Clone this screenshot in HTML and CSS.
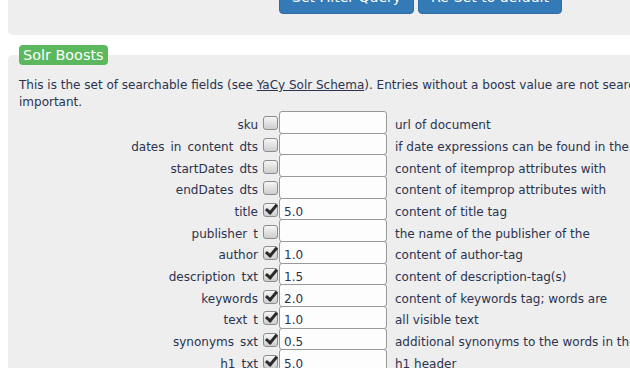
FILE: index.html
```html
<!DOCTYPE html>
<html lang="en">
    <head>
        <meta charset="UTF-8">
        <title>Ranking and Heuristics</title>
        <link rel="stylesheet" href="styles.css">
    </head>
    <body>
        <div class="panel">
            <div class="actions">
                <button type="button" class="btn">Set Filter Query</button>
                <button type="button" class="btn">Re-Set to default</button>
            </div>
        </div>

        <fieldset class="boosts">
            <legend><span class="label">Solr Boosts</span></legend>
            <p class="intro">
                This is the set of searchable fields (see <a href="#">YaCy Solr Schema</a>). Entries without a boost value are not searched. Boost values make hits inside the corresponding field more<br>important.
            </p>
            <table class="fields">
                <tr>
                    <td class="name">sku</td>
                    <td class="boost"><input type="checkbox" class="check"><input type="text" class="value" value=""></td>
                    <td class="desc"><div>url of document</div></td>
                </tr>
                <tr>
                    <td class="name">dates in content dts</td>
                    <td class="boost"><input type="checkbox" class="check"><input type="text" class="value" value=""></td>
                    <td class="desc"><div>if date expressions can be found in the content, these dates are listed here as date objects in order of the appearances</div></td>
                </tr>
                <tr>
                    <td class="name">startDates dts</td>
                    <td class="boost"><input type="checkbox" class="check"><input type="text" class="value" value=""></td>
                    <td class="desc"><div>content of itemprop attributes with content='startDate'</div></td>
                </tr>
                <tr>
                    <td class="name">endDates dts</td>
                    <td class="boost"><input type="checkbox" class="check"><input type="text" class="value" value=""></td>
                    <td class="desc"><div>content of itemprop attributes with content='endDate'</div></td>
                </tr>
                <tr>
                    <td class="name">title</td>
                    <td class="boost"><input type="checkbox" class="check" checked><input type="text" class="value" value="5.0"></td>
                    <td class="desc"><div>content of title tag</div></td>
                </tr>
                <tr>
                    <td class="name">publisher t</td>
                    <td class="boost"><input type="checkbox" class="check"><input type="text" class="value" value=""></td>
                    <td class="desc"><div>the name of the publisher of the document</div></td>
                </tr>
                <tr>
                    <td class="name">author</td>
                    <td class="boost"><input type="checkbox" class="check" checked><input type="text" class="value" value="1.0"></td>
                    <td class="desc"><div>content of author-tag</div></td>
                </tr>
                <tr>
                    <td class="name">description txt</td>
                    <td class="boost"><input type="checkbox" class="check" checked><input type="text" class="value" value="1.5"></td>
                    <td class="desc"><div>content of description-tag(s)</div></td>
                </tr>
                <tr>
                    <td class="name">keywords</td>
                    <td class="boost"><input type="checkbox" class="check" checked><input type="text" class="value" value="2.0"></td>
                    <td class="desc"><div>content of keywords tag; words are separated by comma, semicolon or space</div></td>
                </tr>
                <tr>
                    <td class="name">text t</td>
                    <td class="boost"><input type="checkbox" class="check" checked><input type="text" class="value" value="1.0"></td>
                    <td class="desc"><div>all visible text</div></td>
                </tr>
                <tr>
                    <td class="name">synonyms sxt</td>
                    <td class="boost"><input type="checkbox" class="check" checked><input type="text" class="value" value="0.5"></td>
                    <td class="desc"><div>additional synonyms to the words in the text</div></td>
                </tr>
                <tr>
                    <td class="name">h1 txt</td>
                    <td class="boost"><input type="checkbox" class="check" checked><input type="text" class="value" value="5.0"></td>
                    <td class="desc"><div>h1 header</div></td>
                </tr>
                <tr>
                    <td class="name">h2 txt</td>
                    <td class="boost"><input type="checkbox" class="check" checked><input type="text" class="value" value="3.0"></td>
                    <td class="desc"><div>h2 header</div></td>
                </tr>
            </table>
        </fieldset>
    </body>
</html>
```

FILE: styles.css
```css
html {
    overflow: hidden;
}
body {
    width: 1300px;
    margin: 0 0 0 8px;
    background: #fff;
    color: #2b3350;
    font-family: 'DejaVu Sans', sans-serif;
    font-size: 12px;
    line-height: 1.42857;
}
.panel {
    margin-top: -30px;
    padding: 10px 0 21px;
    background: #eee;
    border-radius: 0 0 5px 5px;
}
.actions {
    padding-left: 271px;
    white-space: nowrap;
}
.btn {
    display: inline-block;
    margin: 0;
    padding: 6px 12px;
    border: 1px solid #2e6da4;
    border-radius: 4px;
    background: #337ab7;
    color: #fff;
    font-family: 'DejaVu Sans', sans-serif;
    font-size: 14px;
    line-height: 20px;
}
.boosts {
    margin: 10px 0 0;
    padding: 0 10px 10px;
    border: 1px solid #eee;
    border-radius: 5px;
    background: #eee;
    min-width: 0;
}
.boosts legend {
    padding: 0;
}
.label {
    display: inline-block;
    padding: 2px 4px;
    border-radius: 4px;
    background: #5cb85c;
    color: #fff;
    font-size: 14.4px;
    line-height: normal;
}
.intro {
    margin: 12px 0 0;
    white-space: nowrap;
}
.intro a {
    color: inherit;
    text-decoration: underline;
}
.fields {
    border-collapse: collapse;
}
.fields td {
    padding: 0;
    line-height: 14px;
    vertical-align: baseline;
    white-space: nowrap;
}
.fields .name {
    width: 239px;
    padding-right: 5px;
    text-align: right;
    word-spacing: 2.2px;
}
.fields .desc {
    padding-left: 8px;
}
.fields .desc div {
    width: 255px;
    height: 14px;
    overflow: clip;
    white-space: normal;
}
.check {
    -webkit-appearance: none;
    appearance: none;
    position: relative;
    width: 15px;
    height: 14px;
    margin: 0 1px 0 0;
    vertical-align: -1px;
    border: 1px solid #8c8c8c;
    border-radius: 3px;
    background: linear-gradient(#f6f6f6, #cdcdcd);
}
.check:checked::after {
    content: "";
    position: absolute;
    left: 4px;
    top: -2px;
    width: 4px;
    height: 9px;
    border: solid #2a2a2a;
    border-width: 0 3px 3px 0;
    transform: rotate(40deg);
}
.value {
    box-sizing: border-box;
    width: 108px;
    height: 22.7px;
    margin: -0.5px 0;
    padding: 6px 4px 0;
    border: 1px solid #999;
    border-radius: 3px;
    background: #fdfdfd;
    color: inherit;
    font-family: 'DejaVu Sans', sans-serif;
    font-size: 12px;
}
```
